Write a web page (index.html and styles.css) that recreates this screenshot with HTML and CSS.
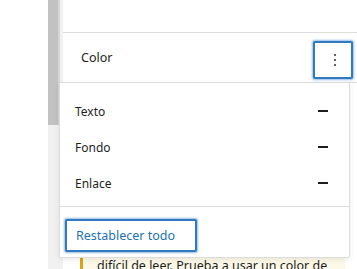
FILE: index.html
```html
<!DOCTYPE html>
<html lang="es">
<head>
    <meta charset="UTF-8">
    <title>Color</title>
    <link rel="stylesheet" href="styles.css">
</head>
<body>
    <div class="screen">
        <div class="gutter"></div>
        <div class="scrollbar"><div class="thumb"></div></div>
        <div class="panel">
            <div class="panel-top"></div>
            <div class="panel-header">
                <h2>Color</h2>
                <button class="options" aria-label="Opciones">
                    <svg width="4" height="14" viewBox="0 0 4 14"><circle cx="2" cy="2" r="1.1"/><circle cx="2" cy="7" r="1.1"/><circle cx="2" cy="12" r="1.1"/></svg>
                </button>
            </div>
            <div class="panel-body">
                <div class="notice">difícil de leer. Prueba a usar un color de</div>
            </div>
        </div>

        <div class="popover">
            <ul class="items">
                <li>Texto <span class="minus"></span></li>
                <li>Fondo <span class="minus"></span></li>
                <li>Enlace <span class="minus"></span></li>
            </ul>
            <div class="reset-row">
                <button class="reset">Restablecer todo</button>
            </div>
        </div>
    </div>
</body>
</html>
```

FILE: styles.css
```css
*{
    box-sizing: border-box;
}
body{
    margin: 0;
    background: #fff;
    font-family: "Noto Sans", "Open Sans", sans-serif;
    font-size: 12px;
    color: #1e1e1e;
    overflow: hidden;
}
.screen{
    position: relative;
    display: flex;
    width: 357px;
    height: 269px;
}
.gutter{
    width: 48px;
}
.scrollbar{
    width: 15px;
    background: #f1f1f1;
}
.thumb{
    width: 12px;
    height: 125px;
    background: #c2c2c2;
    border-right: 2px solid #d6d6d6;
}
.panel{
    flex: 1;
    background: #fff;
}
.panel-top{
    height: 33px;
    border-bottom: 1px solid #dcdcdc;
}
.panel-header{
    height: 50px;
    display: flex;
    align-items: center;
    justify-content: space-between;
    padding: 0 4px 0 18px;
    border-bottom: 1px solid #dcdcdc;
}
.panel-header h2{
    margin: 0;
    font-size: 12.5px;
    font-weight: 400;
    color: #1e1e1e;
}
.options{
    width: 40px;
    height: 38px;
    margin-top: 4px;
    display: flex;
    align-items: center;
    justify-content: center;
    padding: 0 0 0 4px;
    background: #fff;
    border: 2px solid #3179c5;
    border-radius: 2px;
    box-shadow: 0 0 2px 1px rgba(49, 121, 197, 0.5);
    fill: #3c3c3c;
}
.panel-body{
    padding: 157px 12px 0 17px;
}
.notice{
    background: #fcf9e8;
    border-left: 3px solid #dba617;
    padding: 16px 0 0 14px;
    font-size: 12.5px;
    line-height: 20px;
    white-space: nowrap;
    overflow: hidden;
}
.popover{
    position: absolute;
    left: 59px;
    top: 82px;
    width: 291px;
    height: 176px;
    background: #fff;
    border: 1px solid #dcdcdc;
    border-radius: 2px;
    box-shadow: 0 2px 6px rgba(0, 0, 0, 0.08);
}
.items{
    list-style: none;
    margin: 0;
    padding: 10px 0 5px;
    border-bottom: 1px solid #dcdcdc;
}
.items li{
    height: 36px;
    display: flex;
    align-items: center;
    justify-content: space-between;
    padding: 0 21px 0 15px;
}
.minus{
    width: 10px;
    height: 2px;
    background: #1e1e1e;
}
.reset-row{
    padding: 12px 0 0 5px;
}
.reset{
    width: 132px;
    height: 33px;
    padding: 0 0 0 9px;
    text-align: left;
    font-family: inherit;
    font-size: 12.5px;
    color: #2271b1;
    background: #fff;
    border: 2px solid #3179c5;
    border-radius: 2px;
    box-shadow: 0 0 2px 1px rgba(49, 121, 197, 0.5);
}
```
